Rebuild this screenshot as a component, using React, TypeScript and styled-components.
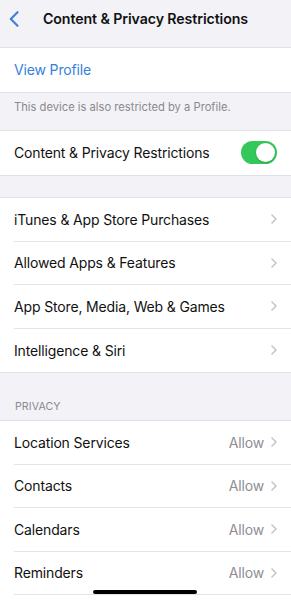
import React from "react";
import styled, { createGlobalStyle } from "styled-components";

const GlobalStyle = createGlobalStyle`
  html, body { margin: 0; padding: 0; }
  body {
    background: #f2f2f7;
    font-family: Inter, "Noto Sans", "Liberation Sans", sans-serif;
    -webkit-font-smoothing: antialiased;
    overflow: hidden;
  }
  * { box-sizing: border-box; }
`;

const Screen = styled.div`
  position: relative;
  width: 291px;
  height: 600px;
  overflow: hidden;
  background: #f2f2f7;
  color: #111;
  display: flex;
  flex-direction: column;
`;

const Header = styled.header`
  flex: none;
  height: 47px;
  display: grid;
  grid-template-columns: 40px 1fr 40px;
  align-items: center;
  padding-bottom: 9px;
`;

const BackButton = styled.div`
  display: flex;
  align-items: center;
  padding-left: 9px;
  color: #3482dc;
  height: 38px;
`;

const Title = styled.h1`
  margin: 0;
  text-align: center;
  font-size: 14.2px;
  font-weight: 600;
  letter-spacing: -0.1px;
  white-space: nowrap;
  line-height: 38px;
`;

const Group = styled.section<{ $open?: boolean }>`
  flex: ${(p) => (p.$open ? "1 0 auto" : "none")};
  background: #fff;
  border-top: 1px solid #e1e1e5;
  border-bottom: ${(p) => (p.$open ? "none" : "1px solid #e1e1e5")};
  ${(p) => (p.$open ? "" : "& > div:last-child > div { border-bottom: none; }")}
`;

const Row = styled.div`
  padding-left: 14px;
`;

const RowInner = styled.div`
  height: 43.5px;
  display: flex;
  align-items: center;
  padding-right: 14px;
  border-bottom: 1px solid #e4e4e7;
`;

const Label = styled.span<{ $blue?: boolean }>`
  flex: 1;
  font-size: 14px;
  letter-spacing: -0.15px;
  color: ${(p) => (p.$blue ? "#3482dc" : "#111")};
  white-space: nowrap;
`;

const Value = styled.span`
  font-size: 14px;
  letter-spacing: -0.15px;
  color: #8e8e93;
  margin-right: 7px;
`;

const Footer = styled.div`
  flex: none;
  padding: 7px 14px 0;
  height: 37.5px;
  font-size: 11.2px;
  line-height: 14px;
  color: #8a8a8e;
`;

const Spacer = styled.div<{ $h: number }>`
  flex: none;
  height: ${(p) => p.$h}px;
`;

const SectionHeader = styled.div`
  flex: none;
  height: 47px;
  padding: 27px 14px 0 15px;
  font-size: 10.6px;
  line-height: 14px;
  color: #8a8a8e;
  letter-spacing: 0.1px;
`;

const Toggle = styled.div<{ $on: boolean }>`
  width: 36px;
  height: 23px;
  border-radius: 12px;
  background: ${(p) => (p.$on ? "#34c759" : "#e9e9ea")};
  display: flex;
  align-items: center;
  justify-content: ${(p) => (p.$on ? "flex-end" : "flex-start")};
  padding: 2px;
`;

const Knob = styled.div`
  width: 19px;
  height: 19px;
  border-radius: 50%;
  background: #fff;
  box-shadow: 0 1px 2px rgba(0, 0, 0, 0.18);
`;

const HomeIndicator = styled.div`
  position: absolute;
  left: 93px;
  bottom: 6px;
  width: 104px;
  height: 4px;
  border-radius: 2px;
  background: #000;
`;

const Chevron = () => (
  <svg width="6" height="10" viewBox="0 0 6 10" fill="none">
    <path d="M1 1l4 4-4 4" stroke="#c4c4c7" strokeWidth="1.5" strokeLinecap="round" strokeLinejoin="round" />
  </svg>
);

const BackChevron = () => (
  <svg width="10" height="16" viewBox="0 0 10 16" fill="none">
    <path d="M8.5 1.2L1.8 8l6.7 6.8" stroke="currentColor" strokeWidth="2.1" strokeLinecap="round" strokeLinejoin="round" />
  </svg>
);

const NavRow = ({ label, value }: { label: string; value?: string }) => (
  <Row>
    <RowInner>
      <Label>{label}</Label>
      {value && <Value>{value}</Value>}
      <Chevron />
    </RowInner>
  </Row>
);

export default function App() {
  return (
    <>
      <GlobalStyle />
      <Screen>
        <Header>
          <BackButton>
            <BackChevron />
          </BackButton>
          <Title>Content &amp; Privacy Restrictions</Title>
          <div />
        </Header>

        <Group>
          <Row>
            <RowInner>
              <Label $blue>View Profile</Label>
            </RowInner>
          </Row>
        </Group>
        <Footer>This device is also restricted by a Profile.</Footer>

        <Group>
          <Row>
            <RowInner>
              <Label>Content &amp; Privacy Restrictions</Label>
              <Toggle $on>
                <Knob />
              </Toggle>
            </RowInner>
          </Row>
        </Group>

        <Spacer $h={21.5} />

        <Group>
          <NavRow label="iTunes & App Store Purchases" />
          <NavRow label="Allowed Apps & Features" />
          <NavRow label="App Store, Media, Web & Games" />
          <NavRow label="Intelligence & Siri" />
        </Group>

        <SectionHeader>PRIVACY</SectionHeader>
        <Group $open>
          <NavRow label="Location Services" value="Allow" />
          <NavRow label="Contacts" value="Allow" />
          <NavRow label="Calendars" value="Allow" />
          <NavRow label="Reminders" value="Allow" />
        </Group>

        <HomeIndicator />
      </Screen>
    </>
  );
}
